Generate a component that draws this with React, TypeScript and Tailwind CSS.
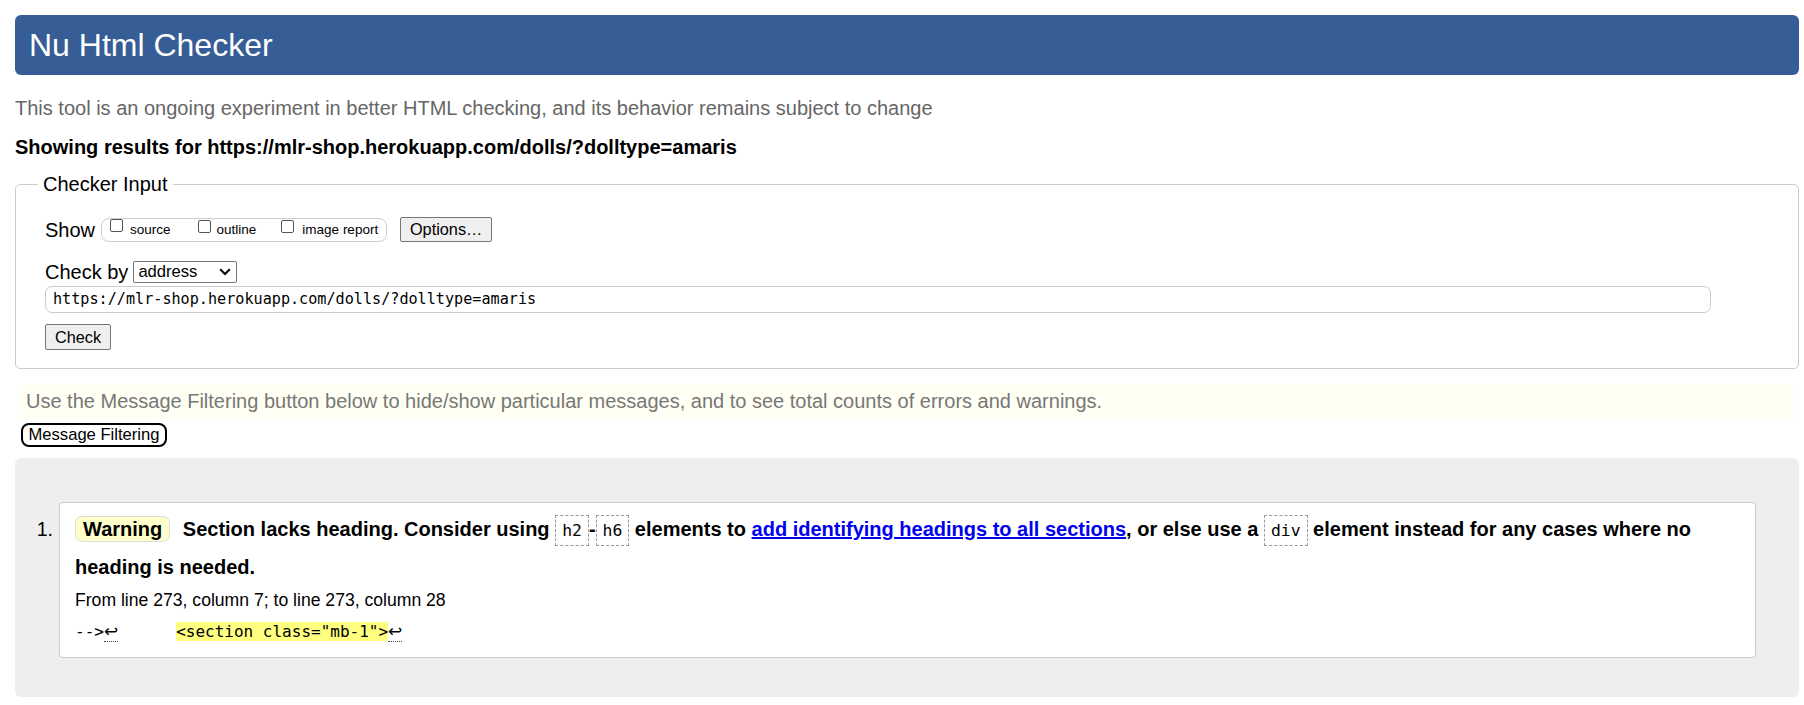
import React from "react";

const mono = "font-['DejaVu_Sans_Mono','Liberation_Mono',monospace]";

function Box() {
  return <span className="inline-block w-[13px] h-[13px] shrink-0 border border-[#555] rounded-[2px] bg-white" />;
}

function Code({ children }: { children: React.ReactNode }) {
  return (
    <code
      className={`inline-block border border-dashed border-[#999] px-[6px] ${mono} font-normal text-[16.4px] leading-[29px] text-black`}
    >
      {children}
    </code>
  );
}

function Ret() {
  return (
    <span className="font-['DejaVu_Sans',sans-serif] text-[17px] leading-[20px] border-b border-dotted border-[#444]">↩</span>
  );
}

export default function App() {
  return (
    <div className="w-[1804px] h-[705px] overflow-hidden bg-white pl-[15px] pr-[5px] pt-[15px] font-['Liberation_Sans',Arial,sans-serif] text-black text-[20px]">
      <h1 className="h-[60px] flex items-center rounded-[6px] bg-[#365d95] pl-[14px] text-[32px] font-normal leading-none text-white">
        Nu Html Checker
      </h1>
      <p className="mt-[22px] leading-[22px] text-[#666]">
        This tool is an ongoing experiment in better HTML checking, and its behavior remains subject to change
      </p>
      <p className="mt-[17px] leading-[22px] font-bold">
        Showing results for https://mlr-shop.herokuapp.com/dolls/?dolltype=amaris
      </p>

      <fieldset className="mt-[15px] border border-[#ccc] rounded-[5px] p-0 m-0 min-w-0">
        <legend className="ml-[22px] px-[5px] leading-[22px]">Checker Input</legend>
        <div className="pl-[29px] pt-[22px] pb-[18px]">
          <div className="flex items-center h-[25px]">
            <span className="leading-[22px]">Show</span>
            <div className="ml-[6px] h-[24px] border border-[#ccc] rounded-[8px] flex items-start px-[8px] text-[13.5px]">
              <Box />
              <span className="ml-[7px] mt-[3px] leading-[16px]">source</span>
              <span className="ml-[27px]">
                <Box />
              </span>
              <span className="ml-[6px] mt-[3px] leading-[16px]">outline</span>
              <span className="ml-[25px]">
                <Box />
              </span>
              <span className="ml-[8px] mt-[3px] leading-[16px]">image report</span>
            </div>
            <button className="ml-[13px] w-[92px] h-[25px] border border-[#767676] rounded-[2px] bg-[#efefef] text-[16.3px] leading-none flex items-center justify-center">
              Options…
            </button>
          </div>

          <div className="mt-[19px] flex items-center h-[22px]">
            <span className="leading-[22px]">Check by</span>
            <div className="ml-[5px] w-[104px] h-[22px] border border-[#767676] rounded-[2px] flex items-center justify-between pl-[4px] pr-[5px] text-[16.6px] leading-none">
              <span>address</span>
              <svg width="12" height="8" viewBox="0 0 12 8">
                <path d="M1.2 1.2 L6 6 L10.8 1.2" fill="none" stroke="#000" strokeWidth="2" />
              </svg>
            </div>
          </div>

          <div
            className={`mt-[3px] w-[1666px] h-[27px] border border-[#ccc] rounded-[7px] pl-[7px] flex items-center ${mono} text-[15.15px] leading-none`}
          >
            https://mlr-shop.herokuapp.com/dolls/?dolltype=amaris
          </div>

          <button className="mt-[11px] w-[66px] h-[26px] border border-[#767676] rounded-[2px] bg-[#efefef] text-[16.3px] leading-none flex items-center justify-center">
            Check
          </button>
        </div>
      </fieldset>

      <div className="mt-[15px] ml-[5px] mr-[6px] h-[34px] bg-[#fffff4] pl-[6px] flex items-center text-[#777] leading-[22px]">
        Use the Message Filtering button below to hide/show particular messages, and to see total counts of errors and warnings.
      </div>

      <button className="mt-[5px] ml-[6px] h-[24px] w-[146px] border-2 border-black rounded-[8px] bg-white text-[16.6px] leading-none flex items-center justify-center">
        Message Filtering
      </button>

      <div className="mt-[11px] h-[239px] rounded-[6px] bg-[#eee] flex pt-[44px] pr-[43px]">
        <div className="w-[44px] shrink-0 text-right pr-[6px] pt-[8px] leading-[38px] text-[19.5px]">1.</div>
        <div className="flex-1 self-start border border-[#ccc] rounded-[4px] bg-white pl-[15px] pr-[15px] pt-[7px] pb-[15px]">
          <p className="text-[20px] font-bold leading-[38px]">
            <span className="inline-block rounded-[7px] border border-[#ddd] bg-[#ffffcc] px-[7px] leading-[24px] mr-[7px]">
              Warning
            </span>{" "}
            Section lacks heading. Consider using <Code>h2</Code>-<Code>h6</Code> elements to{" "}
            <a href="#" className="text-[#0000ee] underline">
              add identifying headings to all sections
            </a>
            , or else use a <Code>div</Code> element instead for any cases where no heading is needed.
          </p>
          <p className="mt-[4px] text-[17.6px] leading-[20px]">From line 273, column 7; to line 273, column 28</p>
          <p className={`mt-[11px] ${mono} text-[16px] leading-[20px] whitespace-pre`}>
            <span>--&gt;</span>
            <Ret />
            <span className="inline-block w-[58px]" />
            <span className="bg-[#ffff80]">&lt;section class="mb-1"&gt;</span>
            <Ret />
          </p>
        </div>
      </div>
    </div>
  );
}
